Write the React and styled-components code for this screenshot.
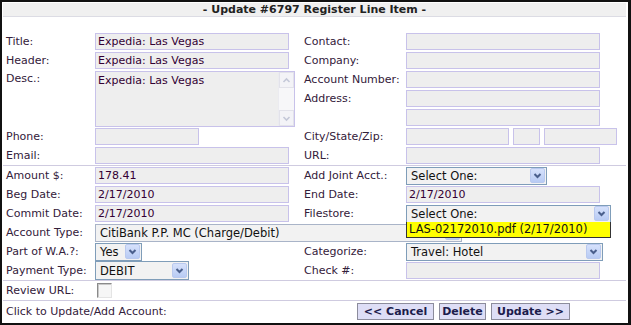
import styled, { createGlobalStyle } from "styled-components";

// 전역 스타일
const GlobalStyle = createGlobalStyle`
  body {
    margin: 0;
    background: #fff;
    font-family: "DejaVu Sans", Verdana, sans-serif;
    font-size: 11px;
    color: #33203a;
  }
`;

const Frame = styled.div`
  width: 631px;
  height: 325px;
  box-sizing: border-box;
  border-style: solid;
  border-color: #111;
  border-width: 2px 3px 2px 2px;
  padding: 1px 2px 0 1px;
  overflow: hidden;
`;

const TitleBar = styled.div`
  height: 13px;
  line-height: 13px;
  background: #f0f0f0;
  border-bottom: 1px solid #dcdce4;
  text-align: center;
  font-weight: bold;
  color: #222;
  margin-bottom: 15px;
`;

const Grid = styled.div`
  display: grid;
  grid-template-columns: 92px 206px 105px 1fr;
  grid-auto-rows: ${(p) => p.$row || 19}px;
  align-items: center;
  border-top: ${(p) => (p.$line ? "1px solid #cfcbe0" : "none")};
`;

const Label = styled.div`
  padding-left: 3px;
  white-space: nowrap;
  grid-column: ${(p) => p.$col || "auto"};
  grid-row: ${(p) => p.$rows || "auto"};
  align-self: ${(p) => (p.$top ? "start" : "center")};
  padding-top: ${(p) => (p.$top ? "2px" : "0")};
`;

const Input = styled.div`
  box-sizing: border-box;
  width: ${(p) => p.$w || 194}px;
  height: 17px;
  line-height: 15px;
  border: 1px solid #c8c2ea;
  background: #eeeeee;
  padding: 0 2px;
  color: #330033;
  white-space: nowrap;
  overflow: hidden;
  grid-column: ${(p) => p.$col || "auto"};
`;

const Split = styled.div`
  display: flex;
  gap: ${(p) => p.$gap || 4}px;
`;

const TextBox = styled.div`
  grid-column: 2;
  grid-row: 3 / span 3;
  align-self: start;
  margin-top: 1px;
  box-sizing: border-box;
  width: 200px;
  height: 56px;
  border: 1px solid #c8c2ea;
  background: #eeeeee;
  display: flex;
  color: #330033;
`;

const TextBody = styled.div`
  flex: 1;
  padding: 1px 2px;
  line-height: 15px;
`;

const ScrollBar = styled.div`
  width: 15px;
  display: flex;
  flex-direction: column;
  justify-content: space-between;
  background: #f7f7f9;
  border-left: 1px solid #ebebf0;
`;

const ScrollBtn = styled.div`
  height: 14px;
  border: 1px solid #e2e2ea;
  background: #f3f3f7;
  display: flex;
  align-items: center;
  justify-content: center;
`;

const Select = styled.div`
  position: relative;
  box-sizing: border-box;
  width: ${(p) => p.$w}px;
  height: ${(p) => p.$h || 18}px;
  border: 1px solid ${(p) => (p.$soft ? "#a9b4c8" : "#7f9db9")};
  background: #f2f2f2;
  display: flex;
  align-items: center;
  grid-column: ${(p) => p.$span || "auto"};
  color: #111;
  font-size: 11.5px;
`;

const SelectText = styled.div`
  flex: 1;
  padding-left: 4px;
  white-space: nowrap;
  overflow: hidden;
`;

const Arrow = styled.div`
  width: 15px;
  height: 15px;
  margin-right: 1px;
  box-sizing: border-box;
  border: 1px solid #b9c9ef;
  border-radius: 2px;
  background: linear-gradient(#d6e1fb, #b8cbf4);
  display: flex;
  align-items: center;
  justify-content: center;
`;

const DropList = styled.div`
  position: absolute;
  top: 100%;
  left: -1px;
  right: -1px;
  height: 16px;
  box-sizing: border-box;
  background: #ffff00;
  border: 1px solid #333;
  border-top: none;
  line-height: 15px;
  padding-left: 2px;
  font-size: 11.5px;
  color: #111;
  white-space: nowrap;
  z-index: 2;
`;

const Check = styled.div`
  margin-left: 2px;
  width: 15px;
  height: 15px;
  box-sizing: border-box;
  border: 1px solid;
  border-color: #8a8a8a #e4e4e4 #e4e4e4 #8a8a8a;
  background: #f6f6f6;
  box-shadow: inset 1px 1px 0 #c8c8c8;
`;

const ButtonBar = styled.div`
  grid-column: 3 / 5;
  display: flex;
  justify-content: center;
  gap: 5px;
`;

const Button = styled.div`
  box-sizing: border-box;
  width: ${(p) => p.$w}px;
  height: 17px;
  line-height: 15px;
  text-align: center;
  border: 1px solid #8c8c9c;
  background: #dedef6;
  font-weight: bold;
  color: #1c1c4c;
`;

function Chevron({ color = "#4a5f8c", up = false, w = 2 }) {
  return (
    <svg width="9" height="7" viewBox="0 0 9 7">
      <polyline
        points={up ? "1.5,5 4.5,2 7.5,5" : "1.5,2 4.5,5 7.5,2"}
        fill="none"
        stroke={color}
        strokeWidth={w}
      />
    </svg>
  );
}

function Drop({ text, w, h, span, soft, children }) {
  return (
    <Select $w={w} $h={h} $span={span} $soft={soft}>
      <SelectText>{text}</SelectText>
      <Arrow>
        <Chevron />
      </Arrow>
      {children}
    </Select>
  );
}

export default function App() {
  return (
    <>
      <GlobalStyle />
      <Frame>
        <TitleBar>- Update #6797 Register Line Item -</TitleBar>

        {/* 기본 정보 */}
        <Grid>
          <Label>Title:</Label>
          <Input>Expedia: Las Vegas</Input>
          <Label>Contact:</Label>
          <Input />

          <Label>Header:</Label>
          <Input>Expedia: Las Vegas</Input>
          <Label>Company:</Label>
          <Input />

          <Label $top $col={1} $rows="3 / span 3">Desc.:</Label>
          <TextBox>
            <TextBody>Expedia: Las Vegas</TextBody>
            <ScrollBar>
              <ScrollBtn>
                <Chevron up color="#c4c8d8" w={1.6} />
              </ScrollBtn>
              <ScrollBtn>
                <Chevron color="#c4c8d8" w={1.6} />
              </ScrollBtn>
            </ScrollBar>
          </TextBox>
          <Label $col={3}>Account Number:</Label>
          <Input $col={4} />
          <Label $col={3}>Address:</Label>
          <Input $col={4} />
          <Input $col={4} />

          <Label $col={1}>Phone:</Label>
          <Input $w={104} />
          <Label>City/State/Zip:</Label>
          <Split>
            <Input $w={103} />
            <Input $w={27} />
            <Input $w={73} />
          </Split>

          <Label>Email:</Label>
          <Input />
          <Label>URL:</Label>
          <Input />
        </Grid>

        {/* 금액 / 계정 */}
        <Grid $line>
          <Label>Amount $:</Label>
          <Input>178.41</Input>
          <Label>Add Joint Acct.:</Label>
          <Drop text="Select One:" w={141} />

          <Label>Beg Date:</Label>
          <Input>2/17/2010</Input>
          <Label>End Date:</Label>
          <Input>2/17/2010</Input>

          <Label>Commit Date:</Label>
          <Input>2/17/2010</Input>
          <Label>Filestore:</Label>
          <Drop text="Select One:" w={205}>
            <DropList>LAS-02172010.pdf (2/17/2010)</DropList>
          </Drop>

          <Label>Account Type:</Label>
          <Drop text="CitiBank P.P. MC (Charge/Debit)" w={367} span="2 / 5" soft />

          <Label>Part of W.A.?:</Label>
          <Drop text="Yes" w={47} />
          <Label>Categorize:</Label>
          <Drop text="Travel: Hotel" w={197} />

          <Label>Payment Type:</Label>
          <Drop text="DEBIT" w={94} h={19} />
          <Label>Check #:</Label>
          <Input />
        </Grid>

        <Grid $line>
          <Label>Review URL:</Label>
          <Check />
        </Grid>

        <Grid $line $row={20}>
          <Label $col="1 / 3">Click to Update/Add Account:</Label>
          <ButtonBar>
            <Button $w={77}>&lt;&lt; Cancel</Button>
            <Button $w={47}>Delete</Button>
            <Button $w={79}>Update &gt;&gt;</Button>
          </ButtonBar>
        </Grid>
      </Frame>
    </>
  );
}
